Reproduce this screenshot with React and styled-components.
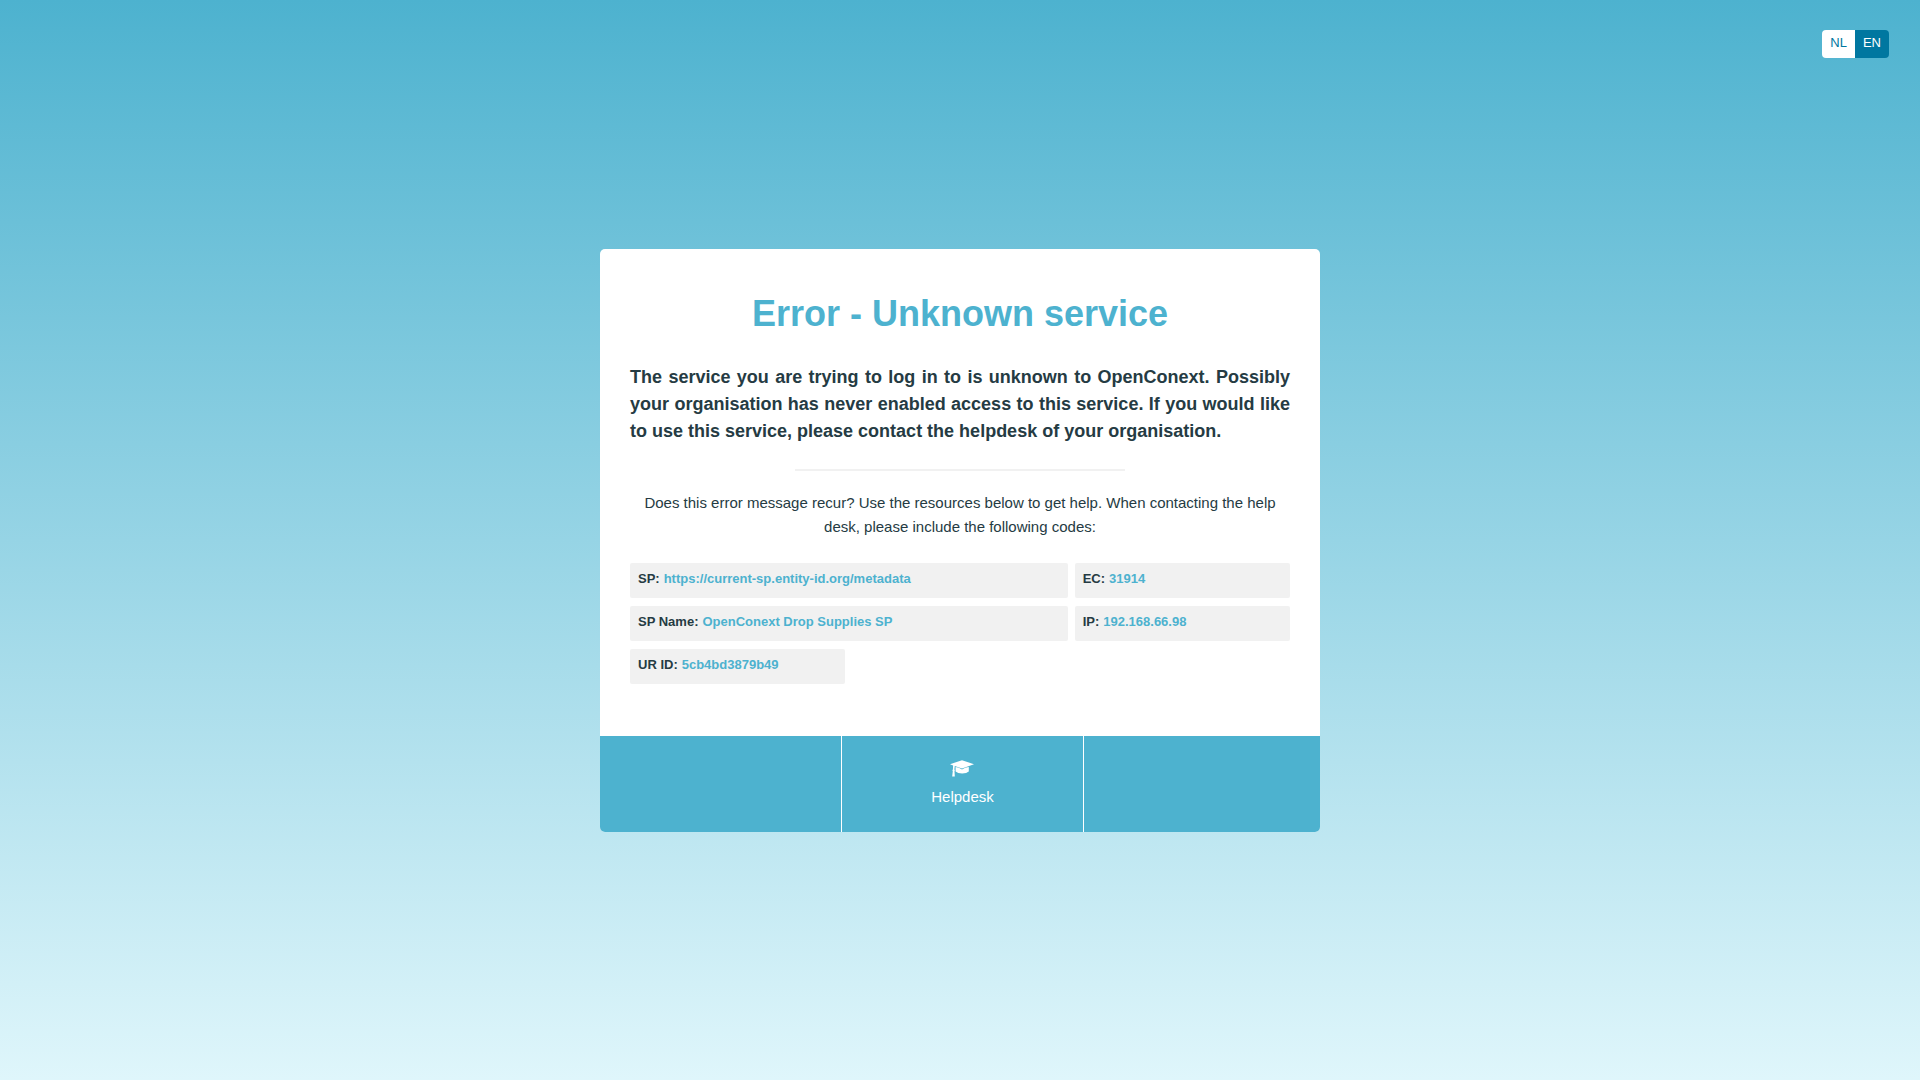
import React from "react";
import styled, { createGlobalStyle } from "styled-components";

const GlobalStyle = createGlobalStyle`
  *, *::before, *::after { box-sizing: border-box; }
  body {
    margin: 0;
    color: #253b43;
    font-family: "Liberation Sans", Arial, sans-serif;
    font-size: 15px;
    line-height: 24px;
  }
`;

const Page = styled.div`
  display: grid;
  grid-template-rows: 1fr auto 1fr;
  min-height: 100vh;
  background: linear-gradient(180deg, #4db2cf 0%, #dff6fb 100%);
`;

const Header = styled.header`
  display: flex;
  justify-content: flex-end;
  align-items: flex-start;
  padding: 30px 31px;
`;

const Languages = styled.nav`
  display: flex;
  border-radius: 4px;
  overflow: hidden;
`;

const Language = styled.a`
  padding: 3px 8px 5px;
  font-size: 13px;
  line-height: 20px;
  text-decoration: none;
  color: ${(p) => (p.$active ? "#fff" : "#0077a0")};
  background: ${(p) => (p.$active ? "#0077a0" : "#fff")};
`;

const Card = styled.main`
  width: 100%;
  max-width: 720px;
  margin: 0 auto;
  border-radius: 5px;
  overflow: hidden;
  background: #fff;
`;

const Content = styled.div`
  padding: 40px 30px 52px;
`;

const Title = styled.h1`
  margin: 0 0 25px;
  font-size: 36px;
  line-height: 50px;
  text-align: center;
  color: #4db2cf;
`;

const Lead = styled.p`
  margin: 0;
  font-size: 18px;
  line-height: 27px;
  font-weight: bold;
  text-align: justify;
`;

const Divider = styled.hr`
  width: 50%;
  height: 2px;
  margin: 24px auto 20px;
  border: 0;
  background: #f1f1f1;
`;

const Help = styled.p`
  margin: 0 0 24px;
  text-align: center;
`;

const Codes = styled.dl`
  display: grid;
  grid-template-columns: repeat(3, 1fr);
  gap: 8px 7px;
  margin: 0;
`;

const Code = styled.div`
  display: flex;
  gap: 4px;
  grid-column: span ${(p) => (p.$wide ? 2 : 1)};
  padding: 6px 8px 9px;
  border-radius: 2px;
  background: #f1f1f1;
  font-size: 13px;
  line-height: 20px;
  font-weight: bold;
`;

const Value = styled.dd`
  margin: 0;
  color: #4db2cf;
`;

const Footer = styled.footer`
  display: grid;
  grid-template-columns: 242fr 242fr 236fr;
  min-height: 96px;
  background: #4db2cf;
`;

const FooterCell = styled.div`
  display: flex;
  justify-content: center;
  border-right: 1px solid #fff;

  &:last-child { border-right: 0; }
`;

const HelpdeskLink = styled.a`
  display: flex;
  flex-direction: column;
  align-items: center;
  gap: 8px;
  padding: 24px 16px 16px;
  color: #fff;
  text-decoration: none;
`;

const CapIcon = () => (
  <svg width="24" height="17" viewBox="0 0 24 17" fill="currentColor" aria-hidden="true">
    <path d="M12 .2 24 4.2 12 8.4 4.8 6 4.4 9.6 4.9 10.2 4.5 11 4.8 16.6H2.2L2.8 11 2.3 10.2 2.9 9.5 3.1 5.4 0 4.2Z" />
    <path d="M5.6 7.1Q9 7.2 12 9.5 15 7.2 18.8 7.1V11.6Q16.7 13.6 12.2 13.6 7.7 13.6 5.6 11.6Z" />
  </svg>
);

const codes = [
  { label: "SP:", value: "https://current-sp.entity-id.org/metadata", wide: true },
  { label: "EC:", value: "31914" },
  { label: "SP Name:", value: "OpenConext Drop Supplies SP", wide: true },
  { label: "IP:", value: "192.168.66.98" },
  { label: "UR ID:", value: "5cb4bd3879b49" },
];

export default function App() {
  return (
    <>
      <GlobalStyle />
      <Page>
        <Header>
          <Languages>
            <Language href="#nl">NL</Language>
            <Language href="#en" $active>EN</Language>
          </Languages>
        </Header>
        <Card>
          <Content>
            <Title>Error - Unknown service</Title>
            <Lead>
              The service you are trying to log in to is unknown to OpenConext. Possibly your
              organisation has never enabled access to this service. If you would like to use this
              service, please contact the helpdesk of your organisation.
            </Lead>
            <Divider />
            <Help>
              Does this error message recur? Use the resources below to get help. When contacting
              the help desk, please include the following codes:
            </Help>
            <Codes>
              {codes.map((c) => (
                <Code key={c.label} $wide={c.wide}>
                  <dt>{c.label}</dt>
                  <Value>{c.value}</Value>
                </Code>
              ))}
            </Codes>
          </Content>
          <Footer>
            <FooterCell />
            <FooterCell>
              <HelpdeskLink href="#helpdesk">
                <CapIcon />
                Helpdesk
              </HelpdeskLink>
            </FooterCell>
            <FooterCell />
          </Footer>
        </Card>
      </Page>
    </>
  );
}
